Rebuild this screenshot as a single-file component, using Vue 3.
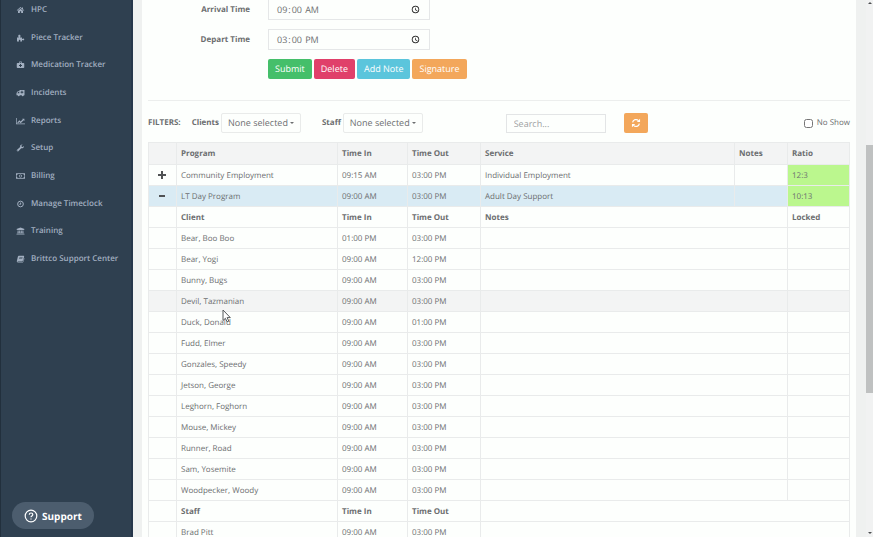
<script setup>
import { ref } from 'vue'

const arrival = ref('09:00')
const depart = ref('15:00')
const search = ref('')
const noShow = ref(false)

const menu = [
  { label: 'HPC', icon: 'home' },
  { label: 'Piece Tracker', icon: 'puzzle' },
  { label: 'Medication Tracker', icon: 'medkit' },
  { label: 'Incidents', icon: 'ambulance' },
  { label: 'Reports', icon: 'chart' },
  { label: 'Setup', icon: 'wrench' },
  { label: 'Billing', icon: 'money' },
  { label: 'Manage Timeclock', icon: 'clock' },
  { label: 'Training', icon: 'bank' },
  { label: 'Brittco Support Center', icon: 'book' },
]

const clients = [
  ['Bear, Boo Boo', '01:00 PM', '03:00 PM'],
  ['Bear, Yogi', '09:00 AM', '12:00 PM'],
  ['Bunny, Bugs', '09:00 AM', '03:00 PM'],
  ['Devil, Tazmanian', '09:00 AM', '03:00 PM'],
  ['Duck, Donald', '09:00 AM', '01:00 PM'],
  ['Fudd, Elmer', '09:00 AM', '03:00 PM'],
  ['Gonzales, Speedy', '09:00 AM', '03:00 PM'],
  ['Jetson, George', '09:00 AM', '03:00 PM'],
  ['Leghorn, Foghorn', '09:00 AM', '03:00 PM'],
  ['Mouse, Mickey', '09:00 AM', '03:00 PM'],
  ['Runner, Road', '09:00 AM', '03:00 PM'],
  ['Sam, Yosemite', '09:00 AM', '03:00 PM'],
  ['Woodpecker, Woody', '09:00 AM', '03:00 PM'],
]
const active = 'Devil, Tazmanian'
</script>

<template>
  <div class="page">
    <aside class="sidebar">
      <ul class="menu">
        <li v-for="item in menu" :key="item.label">
          <a href="#">
            <svg class="icon" viewBox="0 0 18 16" aria-hidden="true">
              <template v-if="item.icon === 'home'">
                <path d="M9 2 1.5 8.5l1 1.1L9 4.2l6.500 5.400 1-1.100-2.500-2.200V3h-2v1.600z" />
                <path d="M9 5.300 4 9.500V14h3.700v-3.700h2.600V14H14V9.500z" />
              </template>
              <path v-else-if="item.icon === 'puzzle'" d="M2 7h3.300C5.600 6 4.500 5.300 4.500 3.800 4.500 2.500 5.400 1.500 6.700 1.500S9 2.500 9 3.800C9 5.300 7.900 6 8.200 7H12v2.700c1 .5 1.500-.7 2.700-.7 1.100 0 1.800.8 1.800 1.800s-.7 1.900-1.800 1.900c-1.200 0-1.700-1.200-2.700-.7V15H8.500c-.5-1 .4-1.500.4-2.300 0-.8-.7-1.400-1.700-1.400s-1.700.6-1.700 1.400c0 .8.900 1.300.4 2.300H2z" />
              <path v-else-if="item.icon === 'medkit'" fill-rule="evenodd" d="M6 4V2.500C6 1.700 6.500 1.200 7.300 1.200h3.400c.8 0 1.300.5 1.300 1.300V4h3c.8 0 1.500.7 1.500 1.500v7c0 .8-.7 1.500-1.500 1.500H3c-.8 0-1.500-.7-1.500-1.500v-7C1.500 4.700 2.200 4 3 4zM7.300 4h3.400V2.500H7.300zM8 6v2H6v2h2v2h2v-2h2V8h-2V6z" />
              <path v-else-if="item.icon === 'ambulance'" fill-rule="evenodd" d="M7 2h10v10.500h-1.500a2 2 0 0 1-4 0H7.500a2 2 0 0 1-4 0H1V8l2.500-3.500H7zM6.500 6H4.300L2.800 8.300h3.700zM11 3.700v1.800H9.200v1.800H11v1.800h1.800V7.300h1.800V5.500h-1.800V3.700z" />
              <template v-else-if="item.icon === 'chart'">
                <path d="M0 2h1.400v11.200H18v1.400H0z" />
                <path d="m2.700 10.800 4-4.200 2.600 2.500 4.300-4.400-1.300-1.300h4.500v4.400l-1.500-1.500-6 6-2.600-2.500-2.900 3z" />
              </template>
              <path v-else-if="item.icon === 'wrench'" d="M15.800 4.200 13.500 6l-2.200-.7-.5-2.200 2.200-1.800C10.300.6 7.600 2.800 8.300 5.900L2.200 11.600c-1.900 1.800.6 4.500 2.500 2.700L10.500 8.500c3 .9 5.800-1.300 5.300-4.300zM3.500 13.600a.7.7 0 1 1 0-1.400.7.7 0 0 1 0 1.400z" />
              <path v-else-if="item.icon === 'money'" fill-rule="evenodd" d="M0 2.500h18v11H0zM3.300 4c0 1.100-.8 1.900-1.900 1.900v4.200c1.100 0 1.900.8 1.900 1.900h11.400c0-1.100.8-1.900 1.900-1.900V5.900c-1.100 0-1.900-.8-1.900-1.900zM9 4.800c2 0 2.900 1.500 2.900 3.200S11 11.200 9 11.200 6.100 9.700 6.100 8 7 4.800 9 4.800zM8.500 6l-1.200.9.500.7.5-.3v1.900h-.9v.9h3.200v-.9h-.9V6z" />
              <g v-else-if="item.icon === 'clock'" class="stroked">
                <circle cx="9" cy="8" r="5.700" />
                <path d="M9.300 5v3.600H6.800" />
              </g>
              <path v-else-if="item.icon === 'bank'" d="m9 .8 8 3v1.400h-1.200v.8H2.200v-.8H1V3.800zM3.200 6.800h2v4.900h1.200V6.800h2v4.900h1.200V6.800h2v4.900h1.200V6.800h2v4.900h1v1H2.200v-1h1zM1 13.400h16V15H1z" />
              <path v-else fill-rule="evenodd" d="M5.600 1.500h9.200c1 0 1.700.8 1.400 1.800L13.800 11c-.3 1-1 1.500-2 1.500H4c-.8 0-1 .8-.3 1h8.800c.9 0 1.300-.4 1.600-1.200l2-6.500c.7.500.9 1 .6 2l-2 5.500c-.4 1.100-1.200 1.700-2.300 1.700H3.900c-1.600 0-2.700-1.300-2.200-2.800l2-8.700c.3-1.200.9-2 1.900-2zm1.300 2.300-.3 1h6.500l.3-1zm-.7 2.300-.3 1h6.500l.3-1z" />
            </svg>
            <span>{{ item.label }}</span>
          </a>
        </li>
      </ul>
      <button class="support" type="button">
        <svg viewBox="0 0 14 14" aria-hidden="true">
          <circle cx="7" cy="7" r="5.800" />
          <path d="M5.300 5.700c0-2.300 3.500-2.200 3.500-.1 0 1.300-1.800 1.300-1.800 2.600" />
          <path d="M7 9.400v1.200" />
        </svg>
        Support
      </button>
    </aside>

    <main class="content">
      <section class="card">
        <form class="times" @submit.prevent>
          <div class="field">
            <label for="arrival">Arrival Time</label>
            <input id="arrival" v-model="arrival" type="time" />
          </div>
          <div class="field">
            <label for="depart">Depart Time</label>
            <input id="depart" v-model="depart" type="time" />
          </div>
          <div class="actions">
            <button class="btn green" type="submit">Submit</button>
            <button class="btn red" type="button">Delete</button>
            <button class="btn blue" type="button">Add Note</button>
            <button class="btn orange" type="button">Signature</button>
          </div>
        </form>

        <div class="filters">
          <strong class="title">FILTERS:</strong>
          <div class="pick clients">
            <label for="clients">Clients</label>
            <button id="clients" class="dropdown" type="button">None selected<i class="caret"></i></button>
          </div>
          <div class="pick staff">
            <label for="staff">Staff</label>
            <button id="staff" class="dropdown" type="button">None selected<i class="caret"></i></button>
          </div>
          <input v-model="search" class="search" type="text" placeholder="Search..." aria-label="Search" />
          <button class="btn orange refresh" type="button" aria-label="Refresh">
            <svg viewBox="0 0 16 16" aria-hidden="true">
              <path class="arc" d="M2.600 7A5.500 5.500 0 0 1 12 4.200M13.400 9A5.500 5.500 0 0 1 4 11.800" />
              <path d="M14.500 1.300v5.200H9.300zM1.500 14.700V9.500h5.200z" />
            </svg>
          </button>
          <label class="noshow"><input v-model="noShow" type="checkbox" />No Show</label>
        </div>

        <table>
          <colgroup>
            <col class="c-toggle" /><col class="c-name" /><col class="c-in" /><col class="c-out" />
            <col /><col class="c-notes" /><col class="c-ratio" />
          </colgroup>
          <thead>
            <tr>
              <th></th><th>Program</th><th>Time In</th><th>Time Out</th><th>Service</th><th>Notes</th><th>Ratio</th>
            </tr>
          </thead>
          <tbody>
            <tr>
              <td class="toggle">
                <button type="button" aria-label="Expand">
                  <svg viewBox="0 0 8 8"><path d="M3 0h2v3h3v2H5v3H3V5H0V3h3z" /></svg>
                </button>
              </td>
              <td>Community Employment</td><td>09:15 AM</td><td>03:00 PM</td><td>Individual Employment</td><td></td>
              <td class="ratio">12:3</td>
            </tr>
            <tr class="open">
              <td class="toggle">
                <button type="button" aria-label="Collapse">
                  <svg viewBox="0 0 8 8"><path d="M1 3h6v2H1z" /></svg>
                </button>
              </td>
              <td>LT Day Program</td><td>09:00 AM</td><td>03:00 PM</td><td>Adult Day Support</td><td></td>
              <td class="ratio">10:13</td>
            </tr>
            <tr>
              <td></td><th>Client</th><th>Time In</th><th>Time Out</th><th colspan="2">Notes</th><th>Locked</th>
            </tr>
            <tr v-for="c in clients" :key="c[0]" :class="{ active: c[0] === active }">
              <td></td>
              <td>{{ c[0] }}</td><td>{{ c[1] }}</td><td>{{ c[2] }}</td><td colspan="2"></td><td></td>
            </tr>
            <tr>
              <td></td><th>Staff</th><th>Time In</th><th>Time Out</th><td colspan="3"></td>
            </tr>
            <tr>
              <td></td><td>Brad Pitt</td><td>09:00 AM</td><td>03:00 PM</td><td colspan="3"></td>
            </tr>
          </tbody>
        </table>
      </section>
    </main>

    <div class="scrollbar" aria-hidden="true">
      <i class="arrow up"></i>
      <i class="thumb"></i>
      <i class="arrow down"></i>
    </div>

    <svg class="cursor" viewBox="0 0 10 14" aria-hidden="true">
      <path d="M1 1v10.500l2.400-2.200 1.700 3.500 1.700-.8-1.700-3.400h3.200z" />
    </svg>
  </div>
</template>

<style>
body {
  overflow: hidden;
  background: #eff1f0;
}
</style>

<style scoped>
* {
  box-sizing: border-box;
}

.page {
  display: flex;
  height: 100vh;
  overflow: hidden;
  font: 8px/12px "Open Sans", "Noto Sans", sans-serif;
  text-rendering: geometricPrecision;
  color: #6c6e70;
}

button,
input {
  margin: 0;
  font: inherit;
  color: inherit;
  text-rendering: inherit;
}

/* Sidebar */
.sidebar {
  display: flex;
  flex: 0 0 133px;
  flex-direction: column;
  justify-content: space-between;
  min-width: 0;
  background: #2f4050;
  border-left: 1px solid #22303d;
  border-right: 2px solid #25364a;
}

.menu {
  display: grid;
  grid-auto-rows: 1fr;
  height: 277px;
  margin: -4px 0 0;
  padding: 0 0 0 15px;
  list-style: none;
}

.menu a {
  display: flex;
  align-items: center;
  gap: 6px;
  height: 100%;
  color: #a2afc0;
  font-weight: 600;
  text-decoration: none;
  white-space: nowrap;
}

.icon {
  width: 9px;
  height: 8px;
  fill: currentColor;
}

.stroked {
  fill: none;
  stroke: currentColor;
  stroke-width: 2;
}

.support {
  display: flex;
  align-items: center;
  gap: 4px;
  align-self: flex-start;
  height: 27px;
  margin: 0 0 8px 11px;
  padding: 0 12px;
  border: 0;
  border-radius: 14px;
  background: #4c5d6e;
  color: #fff;
  font-size: 10px;
  font-weight: 700;
}

.support svg {
  width: 14px;
  height: 14px;
  fill: none;
  stroke: #fff;
  stroke-width: 1.2;
}

/* Main card */
.content {
  flex: 1;
  min-width: 0;
  padding: 0 10px 0 9px;
}

.card {
  min-height: 100%;
  padding: 0 6px;
  background: #fdfffd;
}

.times {
  display: flex;
  flex-direction: column;
  gap: 9px;
  margin-top: -1px;
  padding-bottom: 21px;
  border-bottom: 1px solid #eceeed;
}

.field {
  display: flex;
  align-items: center;
}

.field label {
  width: 102px;
  margin-right: 18px;
  font-weight: 700;
  text-align: right;
}

.field input {
  width: 162px;
  height: 21px;
  padding: 0 9px 0 7px;
  border: 1px solid #e5e7e8;
  background: transparent;
  font-size: 9px;
}

.field input::-webkit-calendar-picker-indicator {
  width: 9px;
  height: 9px;
  padding: 0;
}

.actions {
  display: flex;
  gap: 2px;
  padding-left: 120px;
}

.btn {
  height: 20px;
  padding: 0 7px;
  border: 0;
  border-radius: 2px;
  color: #fff;
  font-size: 9px;
  white-space: nowrap;
}

.green { background: #45bf6a; }
.red { background: #e0406a; }
.blue { background: #5bc5dc; }
.orange { background: #f3a75b; }

/* Filters */
.filters {
  display: flex;
  align-items: center;
  height: 41px;
  padding-top: 3px;
}

.title,
.pick label {
  font-weight: 700;
}

.pick {
  display: flex;
  align-items: center;
  gap: 2px;
}

.clients { margin-left: 11px; }
.staff { margin-left: 21px; }

.dropdown {
  display: flex;
  align-items: center;
  gap: 2px;
  height: 20px;
  padding: 0 6px;
  border: 1px solid #e9ebea;
  border-radius: 2px;
  background: transparent;
  font-size: 9px;
  white-space: nowrap;
}

.caret {
  border: 2px solid transparent;
  border-top-color: currentColor;
  border-bottom: 0;
}

.search {
  width: 100px;
  height: 19px;
  margin-left: 83px;
  padding: 0 7px;
  border: 1px solid #e3e5e6;
  background: transparent;
  font-size: 9px;
}

.search::placeholder {
  color: #a0a2a3;
}

.refresh {
  display: grid;
  place-items: center;
  width: 24px;
  height: 20px;
  margin-left: 18px;
  padding: 0;
}

.refresh svg {
  width: 10px;
  height: 10px;
  fill: #fff;
}

.refresh .arc {
  fill: none;
  stroke: #fff;
  stroke-width: 2;
}

.noshow {
  display: flex;
  align-items: center;
  gap: 4px;
  margin-left: auto;
  white-space: nowrap;
}

.noshow input {
  width: 9px;
  height: 9px;
}

/* Table */
table {
  width: 100%;
  table-layout: fixed;
  border-collapse: collapse;
}

.c-toggle { width: 28px; }
.c-name { width: 161px; }
.c-in { width: 70px; }
.c-out { width: 73px; }
.c-notes { width: 53px; }
.c-ratio { width: 62px; }

tr {
  height: 21px;
}

th,
td {
  padding: 1px 4px 0;
  border: 1px solid #e9ebeb;
  text-align: left;
  white-space: nowrap;
}

th {
  font-weight: 700;
}

thead tr {
  height: 22px;
  background: #f3f4f4;
}

.open { background: #d9ebf4; }
.active { background: #f3f4f4; }
.ratio { background: #bbf78e; }

.toggle {
  padding: 0 2px 0 0;
  text-align: center;
}

.toggle button {
  display: grid;
  place-items: center;
  width: 100%;
  height: 14px;
  padding: 0;
  border: 0;
  background: none;
}

.toggle svg {
  width: 8px;
  height: 8px;
  fill: #505254;
}

/* Scroll track */
.scrollbar {
  display: grid;
  grid-template-rows: 145fr 248fr 144fr;
  flex: 0 0 7px;
  justify-items: center;
  background: #f1f2f2;
}

.thumb {
  width: 100%;
  background: #bfc1c1;
}

.arrow {
  align-self: start;
  margin-top: 2px;
  border: 2px solid transparent;
  border-top: 0;
  border-bottom-color: #4c4e50;
}

.down {
  align-self: end;
  margin: 0 0 3px;
  border-top: 2px solid #4c4e50;
  border-bottom: 0;
}

/* Pointer floating over the page */
.cursor {
  position: absolute;
  top: 309px;
  left: 222px;
  width: 10px;
  height: 14px;
  fill: #fff;
  stroke: #55585a;
}
</style>
